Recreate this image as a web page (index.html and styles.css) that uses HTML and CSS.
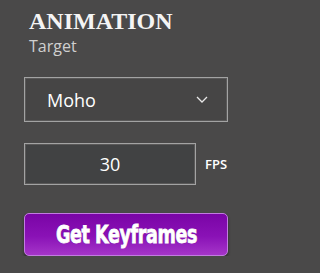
FILE: index.html
```html
<!DOCTYPE html>
<html>
<head>
<meta charset="utf-8">
<link rel="stylesheet" href="styles.css">
</head>
<body>
<div class="panel">
  <h1 class="title">ANIMATION</h1>
  <div class="subtitle">Target</div>
  <div class="select">
    <span class="select-value">Moho</span>
    <svg class="chevron" width="12" height="7" viewBox="0 0 12 7"><path d="M1 1 L6 6 L11 1" fill="none" stroke="#e8e8e8" stroke-width="1.3"/></svg>
  </div>
  <div class="fps-row">
    <div class="fps-input">30</div>
    <span class="fps-label">FPS</span>
  </div>
  <button class="action"><span class="action-label">Get Keyframes</span></button>
</div>
</body>
</html>
```
FILE: styles.css
```css
html, body {
  margin: 0;
  padding: 0;
  background: #4a4949;
}
.panel {
  display: flex;
  flex-direction: column;
  align-items: flex-start;
  padding-left: 24px;
}
.title {
  margin: 9px 0 0 5px;
  font-family: "Liberation Serif", serif;
  font-weight: bold;
  font-size: 24px;
  line-height: 24px;
  color: #f4f4f4;
}
.subtitle {
  margin: 3px 0 0 5px;
  font-family: "Open Sans", sans-serif;
  font-size: 16px;
  line-height: 20px;
  color: #cfcfcf;
}
.select {
  margin-top: 21px;
  box-sizing: border-box;
  width: 204px;
  height: 45px;
  border: 1px solid #a3a3a3;
  box-shadow: inset 0 0 0 1px #5a5959;
  background: #464545;
  display: flex;
  align-items: center;
  justify-content: space-between;
  padding: 0 19px 0 22px;
}
.select-value {
  font-family: "Open Sans", sans-serif;
  font-size: 18px;
  color: #ffffff;
}
.chevron {
  display: block;
}
.fps-row {
  margin-top: 21px;
  display: flex;
  align-items: center;
  gap: 9px;
}
.fps-input {
  box-sizing: border-box;
  width: 172px;
  height: 42px;
  border: 1px solid #a3a3a3;
  box-shadow: inset 0 0 0 1px #5a5959;
  background: #414243;
  display: flex;
  align-items: center;
  justify-content: center;
  font-family: "Open Sans", sans-serif;
  font-size: 18px;
  color: #ffffff;
}
.fps-label {
  font-family: "Open Sans", sans-serif;
  font-size: 13px;
  font-weight: 600;
  color: #ffffff;
}
.action {
  margin-top: 28px;
  box-sizing: border-box;
  width: 204px;
  height: 43px;
  border: 1px solid #c27be0;
  border-radius: 5px;
  background: linear-gradient(#7a04a6, #8a12b6 55%, #a535c9);
  box-shadow: 0 2px 3px rgba(0,0,0,0.45);
  padding: 0;
  display: flex;
  align-items: center;
  justify-content: center;
}
.action-label {
  display: inline-block;
  color: #ffffff;
  font-family: "DejaVu Sans Condensed", "DejaVu Sans", sans-serif;
  font-weight: bold;
  font-size: 25px;
  line-height: 1;
  letter-spacing: -0.5px;
  transform: scaleX(0.78);
  -webkit-text-stroke: 0.8px #ffffff;
  text-shadow: 0 0 1px #3a0050;
}
```
